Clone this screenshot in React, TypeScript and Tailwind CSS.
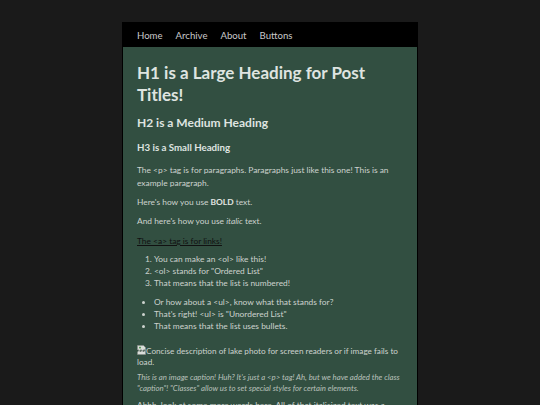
import React from "react"

const links = ["Home", "Archive", "About", "Buttons"]

function BrokenImage() {
  return (
    <svg width="9" height="10" viewBox="0 0 9 10" className="inline-block align-[-1px]" aria-hidden>
      <path d="M0.5 0.5h6l2 2v3l-1.5-1-1.5 1.5-1.5-1.5-1.5 1.5-1.5-1.5-0.5 0.5z" fill="#d9ddd9" stroke="#8a8f8a" strokeWidth="0.6" />
      <path d="M0.5 7l1.5-1.5 1.5 1.5 1.5-1.5 1.5 1.5 1.5-1.5 0.5 0.5v3.5h-8z" fill="#d9ddd9" stroke="#8a8f8a" strokeWidth="0.6" />
      <rect x="2" y="1.8" width="2" height="1.6" fill="#5a9a5a" />
    </svg>
  )
}

export default function App() {
  return (
    <div
      className="min-h-[405px] bg-[#1a1a1a] pt-[22px]"
      style={{ fontFamily: "Lato, 'Noto Sans', sans-serif" }}
    >
      <div className="mx-auto w-[296px] border-x border-black">
        <nav className="flex h-[25px] items-center gap-[13px] bg-black px-[14px] pt-[3px] text-[9.6px] text-[#c9c9c9]">
          {links.map((l) => (
            <a key={l} href="#">
              {l}
            </a>
          ))}
        </nav>
        <main className="bg-[#324f41] px-[14px] pt-[15px] pb-6 text-[8.4px] leading-[13px] text-[#cdd3ce]">
          <h1 className="text-[17px] font-bold leading-[22px] text-[#dfe4e0]">
            H1 is a Large Heading for Post Titles!
          </h1>
          <h2 className="mt-[8px] text-[12px] font-bold leading-[18px] text-[#dfe4e0]">
            H2 is a Medium Heading
          </h2>
          <h3 className="mt-[8px] text-[9.7px] font-bold leading-[14px] text-[#dfe4e0]">
            H3 is a Small Heading
          </h3>
          <p className="mt-[10px]">
            The &lt;p&gt; tag is for paragraphs. Paragraphs just like this one! This is an example paragraph.
          </p>
          <p className="mt-[6px]">
            Here's how you use <b className="text-[#e2e6e2]">BOLD</b> text.
          </p>
          <p className="mt-[6px]">
            And here's how you use <i>italic</i> text.
          </p>
          <p className="mt-[7px]">
            <a href="#" className="text-[#111] underline">
              The &lt;a&gt; tag is for links!
            </a>
          </p>
          <ol className="mt-[5px] list-decimal pl-[17px] leading-[12px]">
            <li>You can make an &lt;ol&gt; like this!</li>
            <li>&lt;ol&gt; stands for "Ordered List"</li>
            <li>That means that the list is numbered!</li>
          </ol>
          <ul className="mt-[7px] list-disc pl-[17px] leading-[12px]">
            <li>Or how about a &lt;ul&gt;, know what that stands for?</li>
            <li>That's right! &lt;ul&gt; is "Unordered List"</li>
            <li>That means that the list uses bullets.</li>
          </ul>
          <p className="mt-[13px] text-[8.2px] leading-[11px]">
            <BrokenImage />
            Concise description of lake photo for screen readers or if image fails to load.
          </p>
          <p className="mt-[4px] text-[7.8px] italic leading-[11px] text-[#b9c1bb]">
            This is an image caption! Huh? It's just a &lt;p&gt; tag! Ah, but we have added the class
            "caption"! "Classes" allow us to set special styles for certain elements.
          </p>
          <p className="mt-[5px]">
            Ahhh, look at some more words here. All of that italicized text was a caption, remember?
          </p>
        </main>
      </div>
    </div>
  )
}
